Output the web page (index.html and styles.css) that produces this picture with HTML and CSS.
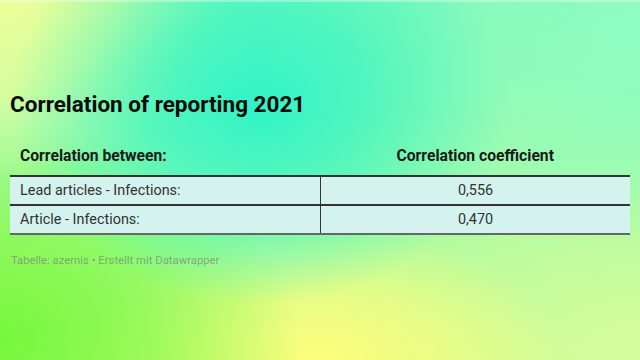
FILE: index.html
```html
<!DOCTYPE html>
<html lang="en">
<head>
<meta charset="utf-8">
<title>Correlation of reporting 2021</title>
<link rel="stylesheet" href="styles.css">
</head>
<body>
<main class="chart">
  <h1 class="title">Correlation of reporting 2021</h1>
  <table class="table">
    <thead>
      <tr>
        <th class="col-left">Correlation between:</th>
        <th class="col-right">Correlation coefficient</th>
      </tr>
    </thead>
    <tbody>
      <tr>
        <td class="col-left">Lead articles - Infections:</td>
        <td class="col-right">0,556</td>
      </tr>
      <tr>
        <td class="col-left">Article - Infections:</td>
        <td class="col-right">0,470</td>
      </tr>
    </tbody>
  </table>
  <p class="footer">Tabelle: azernis • Erstellt mit Datawrapper</p>
</main>
</body>
</html>
```

FILE: styles.css
```css
html, body {
  margin: 0;
  padding: 0;
  width: 640px;
  height: 360px;
  overflow: hidden;
}

body {
  font-family: Roboto, "Liberation Sans", sans-serif;
  background-color: #b0fca0;
  background-image:
    linear-gradient(to bottom, rgba(255,255,255,0.35) 0, rgba(255,255,255,0.35) 2px, rgba(255,255,255,0) 2px),
    radial-gradient(ellipse 250px 200px at 260px 105px, #30f4c6 0%, rgba(48,244,198,0.65) 45%, rgba(48,244,198,0) 100%),
    radial-gradient(ellipse 230px 180px at 0px 0px, #eefe98 0%, rgba(238,254,152,0.75) 50%, rgba(238,254,152,0) 100%),
    radial-gradient(ellipse 300px 220px at 0px 340px, #76f83a 0%, rgba(118,248,58,0.6) 50%, rgba(118,248,58,0) 100%),
    radial-gradient(ellipse 240px 130px at 320px 355px, #fdfd7c 0%, rgba(253,253,124,0.6) 50%, rgba(253,253,124,0) 100%),
    radial-gradient(ellipse 260px 180px at 640px 360px, #d4fd9c 0%, rgba(212,253,156,0) 100%),
    radial-gradient(ellipse 300px 220px at 640px 40px, #90fdc0 0%, rgba(144,253,192,0) 100%),
    linear-gradient(180deg, #7ff8b8 0%, #a8fba8 50%, #c8fb90 100%);
}

.chart {
  padding: 90px 10px 0 10px;
}

.title {
  margin: 0;
  font-size: 22.5px;
  font-weight: 700;
  line-height: 28px;
  color: #0a0a0a;
}

.table {
  margin-top: 15px;
  width: 620px;
  border-collapse: collapse;
  color: #333;
}

.table th {
  font-size: 15.7px;
  font-weight: 700;
  color: #1a1a1a;
  padding: 13px 10px 9px 10px;
  line-height: 20px;
  border-bottom: 2px solid #333;
}

.table td {
  font-size: 14.4px;
  background: #d4f2ee;
  padding: 0 10px;
  height: 27px;
  line-height: 20px;
  border-bottom: 2px solid #333;
}

.table tbody tr:last-child td {
  border-bottom: 2px solid #666;
}

.col-left {
  text-align: left;
  width: 290px;
}

.col-right {
  text-align: center;
}

.table td.col-left {
  border-right: 1px solid #333;
}

.footer {
  margin: 19px 0 0 1px;
  font-size: 11.3px;
  color: rgba(120, 130, 120, 0.7);
  line-height: 14px;
}
```
